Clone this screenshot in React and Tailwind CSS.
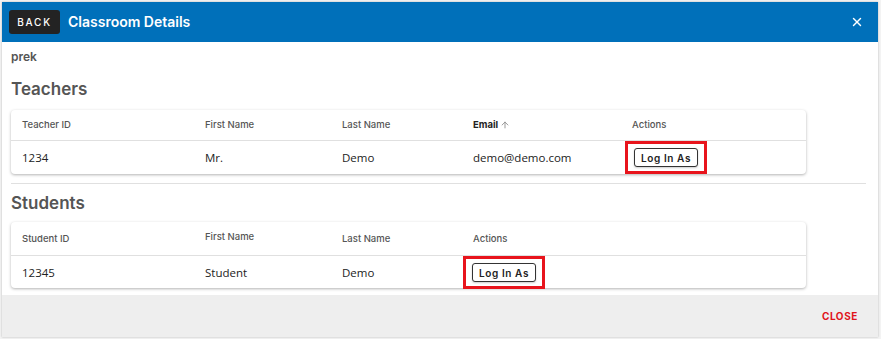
import { X, ArrowUp } from "lucide-react";

const heading = { fontFamily: "Inter, 'Noto Sans', sans-serif" };

function LogInAs() {
  return (
    <span className="inline-flex border-[3px] border-[#e8141c] px-[6px] py-[4px]">
      <button
        className="h-[19px] w-[64px] rounded-[3px] border border-[#333] bg-white text-[10px] leading-none font-semibold tracking-[0.06em] text-[#222] shadow-[0_1px_2px_rgba(0,0,0,0.2)]"
        style={heading}
      >
        Log In As
      </button>
    </span>
  );
}

function HeadCell({ children, className = "" }) {
  return (
    <div className={"pl-[11px] text-[9.5px] leading-[12px] font-medium text-[#555] " + className} style={heading}>
      {children}
    </div>
  );
}

function Cell({ children, className = "" }) {
  return (
    <div
      className={"pl-[11px] text-[11.5px] leading-[16px] text-[#222] flex items-center " + className}
      style={{ fontFamily: "'Open Sans', sans-serif" }}
    >
      {children}
    </div>
  );
}

export default function App() {
  return (
    <div className="w-[881px] h-[339px] bg-[#f3f3f3] pt-[2px] pl-[2px] pr-[3px] pb-[2px]">
      <div className="h-full bg-white flex flex-col shadow-[0_0_2px_rgba(0,0,0,0.25)]">
        {/* header */}
        <div className="h-[40px] shrink-0 bg-[#0070ba] flex items-center pl-[7px] pr-[14px]">
          <button
            className="h-[24px] w-[51px] rounded-[3px] bg-[#232323] text-white text-[10px] tracking-[0.18em] font-medium"
            style={heading}
          >
            BACK
          </button>
          <h2 className="ml-[8px] text-white text-[14px] leading-[20px] font-semibold" style={heading}>
            Classroom Details
          </h2>
          <X className="ml-auto text-white" size={14} strokeWidth={2.5} />
        </div>

        {/* body */}
        <div className="flex-1 px-[9px] overflow-hidden">
          <div className="mt-[7px] text-[12px] leading-[16px] font-semibold text-[#555]" style={heading}>
            prek
          </div>
          <h3 className="mt-[13px] text-[17px] leading-[22px] font-semibold text-[#555]" style={heading}>
            Teachers
          </h3>

          <div className="mt-[10px] w-[795px] rounded-[4px] bg-white shadow-[0_1px_3px_rgba(0,0,0,0.3)]">
            <div className="grid grid-cols-[183px_137px_131px_159px_1fr] h-[31px] items-center border-b border-[#e0e0e0]">
              <HeadCell>Teacher ID</HeadCell>
              <HeadCell>First Name</HeadCell>
              <HeadCell>Last Name</HeadCell>
              <HeadCell className="!font-bold !text-[#222] flex items-center gap-[2px]">
                Email <ArrowUp size={10} className="text-[#888]" />
              </HeadCell>
              <HeadCell>Actions</HeadCell>
            </div>
            <div className="grid grid-cols-[183px_137px_131px_159px_1fr] h-[33px] items-center">
              <Cell>1234</Cell>
              <Cell>Mr.</Cell>
              <Cell>Demo</Cell>
              <Cell>demo@demo.com</Cell>
              <div className="pl-[4px]">
                <LogInAs />
              </div>
            </div>
          </div>

          <div className="mt-[9px] h-px w-[855px] bg-[#e0e0e0]" />

          <h3 className="mt-[8px] text-[17px] leading-[22px] font-semibold text-[#555]" style={heading}>
            Students
          </h3>

          <div className="mt-[8px] w-[795px] rounded-[4px] bg-white shadow-[0_1px_3px_rgba(0,0,0,0.3)]">
            <div className="grid grid-cols-[183px_137px_131px_1fr] h-[34px] items-center border-b border-[#e0e0e0]">
              <HeadCell>Student ID</HeadCell>
              <HeadCell className="-mt-[3px]">First Name</HeadCell>
              <HeadCell>Last Name</HeadCell>
              <HeadCell>Actions</HeadCell>
            </div>
            <div className="grid grid-cols-[183px_137px_131px_1fr] h-[32px] items-center">
              <Cell>12345</Cell>
              <Cell>Student</Cell>
              <Cell>Demo</Cell>
              <div className="pl-[1px]">
                <LogInAs />
              </div>
            </div>
          </div>
        </div>

        {/* footer */}
        <div className="h-[42px] shrink-0 bg-[#eeeeee] flex items-center justify-end pr-[20px]">
          <button className="text-[10px] font-bold tracking-[0.06em] text-[#e0141c]" style={heading}>
            CLOSE
          </button>
        </div>
      </div>
    </div>
  );
}
